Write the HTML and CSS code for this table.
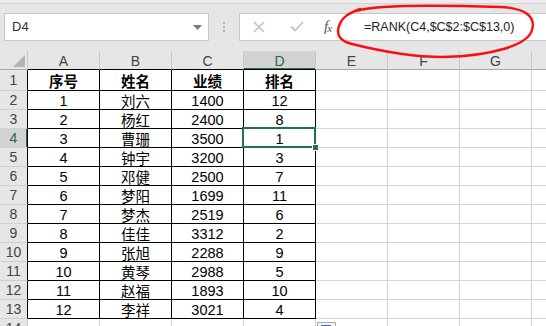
FILE: index.html
```html
<!DOCTYPE html>
<html lang="zh-CN">
<head>
<meta charset="utf-8">
<title>排名</title>
<link rel="stylesheet" href="styles.css">
</head>
<body>
<div class="app">
  <div class="ribbon-edge"></div>

  <div class="formula-bar">
    <div class="name-box">
      <span class="name-text">D4</span>
      <svg class="caret" width="9" height="5" viewBox="0 0 9 5"><polygon points="0,0 9,0 4.5,5" fill="#7a7a7a"/></svg>
    </div>
    <div class="grip"><i></i><i></i><i></i></div>
    <div class="formula-box">
      <div class="fx-buttons">
        <svg class="btn-cancel" width="12" height="12" viewBox="0 0 12 12"><path d="M1 1 L11 11 M11 1 L1 11" stroke="#c3c3c3" stroke-width="1.6" fill="none"/></svg>
        <svg class="btn-enter" width="14" height="11" viewBox="0 0 14 11"><path d="M1 5.5 L5 9.5 L13 1" stroke="#c3c3c3" stroke-width="1.8" fill="none"/></svg>
        <span class="fx">f<span class="fx-x">x</span></span>
      </div>
      <div class="formula-input">=RANK(C4,$C$2:$C$13,0)</div>
    </div>
  </div>

  <div class="sheet">
    <!-- column headers -->
    <div class="corner"><svg width="12" height="12" viewBox="0 0 12 12"><polygon points="12,0 12,12 0,12" fill="#b4b4b4"/></svg></div>
    <div class="ch in">A</div>
    <div class="ch in">B</div>
    <div class="ch in">C</div>
    <div class="ch in active">D</div>
    <div class="ch">E</div>
    <div class="ch">F</div>
    <div class="ch">G</div>
    <div class="ch last"></div>

    <!-- row 1 -->
    <div class="rh in">1</div>
    <div class="c t head">序号</div><div class="c t head">姓名</div><div class="c t head">业绩</div><div class="c t head">排名</div>
    <div class="c"></div><div class="c"></div><div class="c"></div><div class="c last"></div>

    <div class="rh in">2</div>
    <div class="c t">1</div><div class="c t">刘六</div><div class="c t">1400</div><div class="c t">12</div>
    <div class="c"></div><div class="c"></div><div class="c"></div><div class="c last"></div>

    <div class="rh in">3</div>
    <div class="c t">2</div><div class="c t">杨红</div><div class="c t">2400</div><div class="c t">8</div>
    <div class="c"></div><div class="c"></div><div class="c"></div><div class="c last"></div>

    <div class="rh in active">4</div>
    <div class="c t">3</div><div class="c t">曹珊</div><div class="c t">3500</div><div class="c t selected">1<span class="fill-handle"></span></div>
    <div class="c"></div><div class="c"></div><div class="c"></div><div class="c last"></div>

    <div class="rh in">5</div>
    <div class="c t">4</div><div class="c t">钟宇</div><div class="c t">3200</div><div class="c t">3</div>
    <div class="c"></div><div class="c"></div><div class="c"></div><div class="c last"></div>

    <div class="rh in">6</div>
    <div class="c t">5</div><div class="c t">邓健</div><div class="c t">2500</div><div class="c t">7</div>
    <div class="c"></div><div class="c"></div><div class="c"></div><div class="c last"></div>

    <div class="rh in">7</div>
    <div class="c t">6</div><div class="c t">梦阳</div><div class="c t">1699</div><div class="c t">11</div>
    <div class="c"></div><div class="c"></div><div class="c"></div><div class="c last"></div>

    <div class="rh in">8</div>
    <div class="c t">7</div><div class="c t">梦杰</div><div class="c t">2519</div><div class="c t">6</div>
    <div class="c"></div><div class="c"></div><div class="c"></div><div class="c last"></div>

    <div class="rh in">9</div>
    <div class="c t">8</div><div class="c t">佳佳</div><div class="c t">3312</div><div class="c t">2</div>
    <div class="c"></div><div class="c"></div><div class="c"></div><div class="c last"></div>

    <div class="rh in">10</div>
    <div class="c t">9</div><div class="c t">张旭</div><div class="c t">2288</div><div class="c t">9</div>
    <div class="c"></div><div class="c"></div><div class="c"></div><div class="c last"></div>

    <div class="rh in">11</div>
    <div class="c t">10</div><div class="c t">黄琴</div><div class="c t">2988</div><div class="c t">5</div>
    <div class="c"></div><div class="c"></div><div class="c"></div><div class="c last"></div>

    <div class="rh in">12</div>
    <div class="c t">11</div><div class="c t">赵福</div><div class="c t">1893</div><div class="c t">10</div>
    <div class="c"></div><div class="c"></div><div class="c"></div><div class="c last"></div>

    <div class="rh in">13</div>
    <div class="c t">12</div><div class="c t">李祥</div><div class="c t">3021</div><div class="c t">4</div>
    <div class="c"></div><div class="c"></div><div class="c"></div><div class="c last"></div>

    <div class="rh">14</div>
    <div class="c"></div><div class="c"></div><div class="c"></div><div class="c"></div>
    <div class="c"></div><div class="c"></div><div class="c"></div><div class="c last"></div>
  </div>

  <div class="quick-analysis"><span></span></div>

  <!-- hand-drawn red circle around the formula -->
  <svg class="annotation" width="546" height="326" viewBox="0 0 546 326">
    <path d="M356 11 C 378 4, 440 5, 500 7 C 526 8, 536 17, 532 30 C 528 45, 492 56, 443 57 C 408 57, 372 49, 352 44 C 340 41, 336 35, 339 26 C 342 17, 349 13, 360 9"
          fill="none" stroke="#ff0d0d" stroke-width="2.4" stroke-linecap="round" stroke-linejoin="round"/>
  </svg>
</div>
</body>
</html>
```

FILE: styles.css
```css
* { box-sizing: border-box; }

html, body {
  margin: 0;
  padding: 0;
}

body {
  width: 546px;
  height: 326px;
  overflow: hidden;
  background: #e6e6e6;
  font-family: "Liberation Sans", "Noto Sans CJK SC", sans-serif;
}

.app {
  position: relative;
  width: 546px;
  height: 326px;
  overflow: hidden;
}

/* thin strip left of the ribbon above the formula bar */
.ribbon-edge {
  height: 4px;
  background: #eeeeee;
  border-bottom: 1px solid #d4d4d4;
}

.formula-bar {
  display: flex;
  align-items: center;
  height: 47px;
  padding: 9px 0 11px 4px;
}

.name-box {
  width: 205px;
  height: 28px;
  background: #fff;
  border: 1px solid #c6c6c6;
  display: flex;
  align-items: center;
  justify-content: space-between;
  padding: 0 6px 0 7px;
  flex: none;
}

.name-text {
  font-size: 13px;
  color: #333;
}

.caret { margin-top: 1px; }

.grip {
  width: 30px;
  display: flex;
  flex-direction: column;
  align-items: center;
  gap: 2px;
  flex: none;
}

.grip i {
  display: block;
  width: 2px;
  height: 2px;
  background: #b4b4b4;
}

.formula-box {
  flex: 1;
  height: 28px;
  background: #fff;
  border: 1px solid #c6c6c6;
  border-right: none;
  display: flex;
  align-items: center;
}

.fx-buttons {
  width: 124px;
  display: flex;
  align-items: center;
  padding-left: 13px;
  flex: none;
}

.btn-cancel { margin-right: 25px; }
.btn-enter { margin-right: 20px; }

.fx {
  font-family: "Liberation Serif", serif;
  font-style: italic;
  font-size: 15px;
  color: #555;
  letter-spacing: -1px;
}

.fx-x {
  font-size: 11px;
  vertical-align: -1px;
}

.formula-input {
  font-size: 12.5px;
  color: #222;
  white-space: nowrap;
}

/* worksheet grid */
.sheet {
  display: grid;
  grid-template-columns: 28px repeat(7, 72px) 1fr;
  grid-template-rows: 19px 21px repeat(12, 19px) 19px;
}

.corner {
  background: #e6e6e6;
  border-right: 1px solid #c8c8c8;
  border-bottom: 1px solid #a8a8a8;
  display: flex;
  justify-content: flex-end;
  align-items: flex-end;
  padding: 0 2px 2px 0;
}

.ch {
  background: #e6e6e6;
  border-right: 1px solid #c8c8c8;
  border-bottom: 1px solid #a8a8a8;
  display: flex;
  align-items: center;
  justify-content: center;
  font-size: 14px;
  color: #444;
  padding-top: 1px;
}

.ch.in { border-bottom-color: #000; }

.ch.active {
  background: #d3d3d3;
  color: #1f6b41;
  box-shadow: inset 0 -1px 0 #217346;
}

.ch.last { border-right: none; }

.rh {
  background: #e6e6e6;
  border-right: 1px solid #c8c8c8;
  border-bottom: 1px solid #cfcfcf;
  display: flex;
  align-items: center;
  justify-content: center;
  font-size: 14px;
  color: #444;
}

.rh.in { border-right-color: #000; }

.rh.active {
  background: #d3d3d3;
  color: #1f6b41;
  box-shadow: inset -1px 0 0 #217346;
}

.c {
  background: #fff;
  border-right: 1px solid #d4d4d4;
  border-bottom: 1px solid #d4d4d4;
  display: flex;
  align-items: center;
  justify-content: center;
  font-size: 14.5px;
  color: #000;
  padding-top: 1px;
}

.c.last { border-right: none; }

.c.t {
  border-right-color: #000;
  border-bottom-color: #000;
}

.c.head { font-weight: bold; }

.c.selected { position: relative; }

.c.selected::after {
  content: "";
  position: absolute;
  top: -2px;
  left: -2px;
  right: -1px;
  bottom: -1px;
  border: 2px solid #217346;
  pointer-events: none;
}

.fill-handle {
  position: absolute;
  right: -4px;
  bottom: -4px;
  width: 7px;
  height: 7px;
  background: #217346;
  border: 1px solid #fff;
  z-index: 2;
}

/* quick analysis button peeking under the selection */
.quick-analysis {
  position: absolute;
  left: 317px;
  top: 322px;
  width: 19px;
  height: 12px;
  background: #f3f3f3;
  border: 1px solid #a9a9a9;
}

.quick-analysis span {
  position: absolute;
  left: 3px;
  top: 2px;
  width: 10px;
  height: 6px;
  background: #5b8fd6;
  border: 1px solid #3f6fb5;
}

.annotation {
  position: absolute;
  top: 0;
  left: 0;
  pointer-events: none;
}
```
